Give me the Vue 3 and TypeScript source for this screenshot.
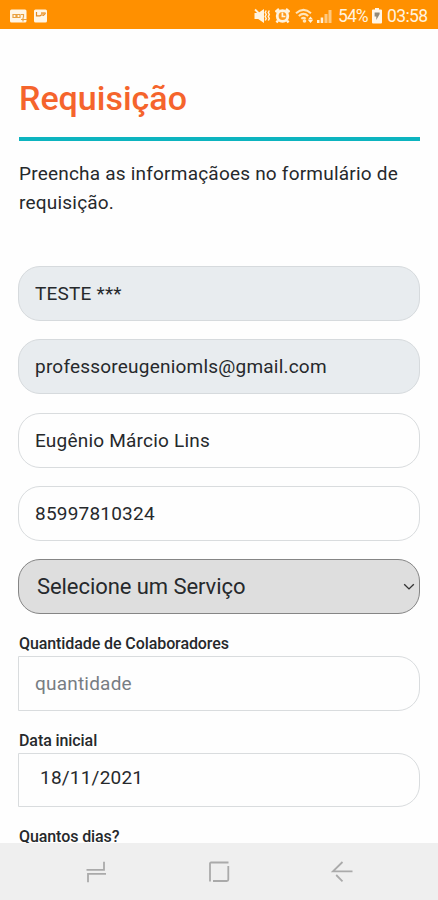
<script setup lang="ts">
import { ref } from 'vue'

interface Field {
  name: string
  value: string
  disabled: boolean
}

const fields = ref<Field[]>([
  { name: 'empresa', value: 'TESTE ***', disabled: true },
  { name: 'email', value: 'professoreugeniomls@gmail.com', disabled: true },
  { name: 'nome', value: 'Eugênio Márcio Lins', disabled: false },
  { name: 'telefone', value: '85997810324', disabled: false },
])
const quantity = ref('')
const startDate = ref('18/11/2021')
</script>

<template>
  <div class="screen">
    <header class="status">
      <div class="status-left">
        <svg width="18" height="14" viewBox="0 0 18 14">
          <rect x="0" y="0.5" width="16.5" height="13" rx="1.5" fill="#fff6e6" />
          <path d="M3 5.5h3v3H3zM7 5.5h3v3H7zM11 5.5h2.5v3M11 10.5h6M13 8.5v4" fill="none" stroke="#e9a13f" stroke-width="1.2" />
        </svg>
        <svg width="14" height="14" viewBox="0 0 14 14">
          <rect x="0" y="0.5" width="13" height="13" rx="1.5" fill="#fff6e6" />
          <path d="M2.5 3v3.800h3.500l1.500-1 2 .6 2-2.400" fill="none" stroke="#e58a20" stroke-width="1.200" />
          <path d="M7 3.200h4.500v2H7z" fill="#f1a84e" />
        </svg>
      </div>
      <div class="status-right">
        <svg class="mute" width="17" height="16" viewBox="0 0 17 16">
          <path d="M0.500 5h3.700L10 1v14L4.200 11H.5z" fill="#fff3df" />
          <path d="M1 1.500l4 4" stroke="#fff3df" stroke-width="1.800" />
          <path d="M12.200 2.500l-1 2 1 2-1 2 1 2-1 2M15.300 2.500l-1 2 1 2-1 2 1 2-1 2" fill="none" stroke="#fff3df" stroke-width="1.500" />
        </svg>
        <svg class="alarm" width="15" height="16" viewBox="0 0 15 16">
          <path d="M.5 4L4 1M14.500 4L11 1M3 12.500l-1.500 2M12 12.500l1.500 2" stroke="#fff3df" stroke-width="2.400" />
          <circle cx="7.500" cy="8" r="6.700" fill="#fff3df" />
          <circle cx="7.500" cy="8" r="3.900" fill="#ff9b1e" />
          <path d="M7.400 4.500v4h3" fill="none" stroke="#fff3df" stroke-width="1.700" />
        </svg>
        <svg class="wifi" width="20" height="16" viewBox="0 0 20 16">
          <g fill="none" stroke="#ffe5bb" stroke-width="2">
            <path d="M1 5.200Q8.500-1.500 16 5.200M3.800 8Q8.500 3.700 13.200 8M6.300 10.800q2.200-1.900 4.400 0" />
          </g>
          <circle cx="9.500" cy="13" r="1.800" fill="#ffe5bb" />
          <path d="M15.500 15l-2.500-3h5zM15.500 8.500l-2.500 3h5z" fill="#fff3df" />
        </svg>
        <svg class="signal" width="15" height="16" viewBox="0 0 15 16">
          <path d="M0 12h2.500v3H0zM3.700 9.500h2.500V15H3.700z" fill="#fff0d8" />
          <path d="M7.500 6h3v9h-3zM11.500 2h3v13h-3z" fill="#ffc980" />
        </svg>
        <span class="percent">54%</span>
        <svg class="battery" width="10" height="16" viewBox="0 0 10 16">
          <path d="M3 0h4v1.500h2a1 1 0 0 1 1 1V14.500a1 1 0 0 1-1 1H1a1 1 0 0 1-1-1V2.500a1 1 0 0 1 1-1h2z" fill="#fff6e8" />
          <path d="M2.600 4.500h5v1.800L4.300 12V8.500H2.600z" fill="#938a78" />
        </svg>
        <span class="clock">03:58</span>
      </div>
    </header>

    <main class="content">
      <h1>Requisição</h1>
      <p class="intro">Preencha as informaçãoes no formulário de requisição.</p>

      <form class="form" @submit.prevent>
        <input
          v-for="field in fields"
          :key="field.name"
          v-model="field.value"
          class="control pill"
          :class="{ disabled: field.disabled }"
          :disabled="field.disabled"
          type="text"
        />
        <div class="select-box">
          <span>Selecione um Serviço</span>
          <svg width="12" height="8" viewBox="0 0 12 8">
            <path d="M1.200 1.300L6 5.900l4.800-4.600" fill="none" stroke="#333" stroke-width="1.400" />
          </svg>
        </div>
        <label class="group">
          <span class="label">Quantidade de Colaboradores</span>
          <input v-model="quantity" class="control half quantity" type="text" placeholder="quantidade" />
        </label>
        <label class="group">
          <span class="label">Data inicial</span>
          <input v-model="startDate" class="control half date" type="text" />
        </label>
        <label class="group">
          <span class="label">Quantos dias?</span>
        </label>
      </form>
    </main>

    <nav class="navbar">
      <svg width="22" height="22" viewBox="0 0 22 22">
        <path d="M1.500 8.800H19V0.800M21 12.800H3V21.300" />
      </svg>
      <svg width="22" height="22" viewBox="0 0 22 22">
        <path d="M2 20.500V2.500a1 1 0 0 1 1-1H20.500M20.300 5v13.500a1.500 1.500 0 0 1-1.500 1.500H5" />
      </svg>
      <svg width="22" height="22" viewBox="0 0 22 22">
        <path d="M11.500 1L2 10.300h19.500M5.200 14l6.300 6.300" />
      </svg>
    </nav>
  </div>
</template>

<style>
body {
  margin: 0;
  background: #fff;
}
</style>

<style scoped>
.screen {
  height: 900px;
  display: flex;
  flex-direction: column;
  overflow: hidden;
  background: #fefefe;
  color: #26292c;
  font-family: Roboto, "Liberation Sans", sans-serif;
}

.status {
  flex: none;
  height: 29px;
  box-sizing: border-box;
  padding: 2px 10px 0;
  display: flex;
  align-items: center;
  justify-content: space-between;
  background: #ff9000;
  color: #fff3df;
  font-size: 17.500px;
}

.status-left,
.status-right {
  display: flex;
  align-items: center;
}

.status-left {
  gap: 6px;
}

.alarm {
  margin-left: 4px;
}

.wifi {
  margin-left: 5px;
}

.signal {
  margin-left: 2px;
}

.percent {
  margin-left: 6px;
  width: 29px;
  letter-spacing: -0.900px;
}

.battery {
  margin-left: 5px;
}

.clock {
  margin-left: 5px;
  width: 41px;
  letter-spacing: -0.600px;
}

.content {
  flex: 1;
  min-height: 0;
  overflow: hidden;
  padding: 0 18px 0 19px;
}

h1 {
  margin: 0;
  height: 112px;
  box-sizing: border-box;
  padding-top: 49px;
  border-bottom: 4px solid #0cb4bf;
  color: #f5642c;
  font-size: 34px;
  line-height: 40px;
  font-weight: 500;
}

.intro {
  margin: 18px 0 0;
  height: 107px;
  font-size: 19px;
  line-height: 29px;
  letter-spacing: 0.210px;
}

.form {
  margin-left: -1px;
  display: flex;
  flex-direction: column;
}

.control,
.select-box {
  box-sizing: border-box;
  width: 100%;
  height: 55px;
  margin: 0 0 18.250px;
  padding: 0 16px;
  border: 1px solid #d9dcde;
  outline: none;
  background: #fefefe;
  color: #26292c;
  font: 19px/29px Roboto, "Liberation Sans", sans-serif;
  letter-spacing: 0.210px;
}

.pill {
  border-radius: 22px;
}

.disabled {
  background: #e8ecef;
  border-color: #d6dadd;
}

.select-box {
  display: flex;
  align-items: center;
  justify-content: space-between;
  padding: 0 4px 0 18px;
  border: 1px solid #858585;
  border-radius: 22px;
  background: #dedede;
  font-size: 22px;
  letter-spacing: -0.070px;
}

.group {
  display: flex;
  flex-direction: column;
}

.label {
  margin-left: 1px;
  height: 24px;
  line-height: 24px;
  font-size: 16px;
  font-weight: 500;
  letter-spacing: -0.090px;
}

.half {
  height: 54.500px;
  border-radius: 0 22px 22px 0;
}

.quantity::placeholder {
  color: #777d83;
  opacity: 1;
}

.date {
  height: 54px;
  padding: 0 21px 6px;
}

.navbar {
  flex: none;
  height: 57px;
  display: flex;
  align-items: center;
  justify-content: center;
  gap: 101px;
  background: #efefef;
}

.navbar path {
  fill: none;
  stroke: #aaa;
  stroke-width: 1.800;
}
</style>
